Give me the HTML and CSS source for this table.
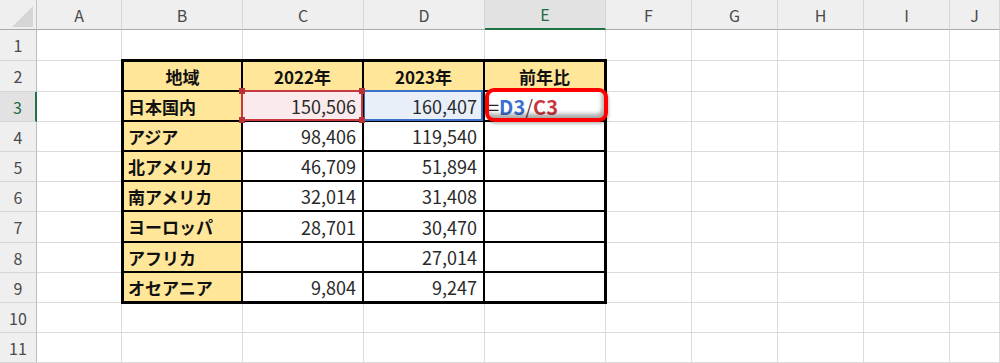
FILE: index.html
```html
<!DOCTYPE html>
<html lang="ja">
<head>
  <meta charset="UTF-8">
  <meta name="viewport" content="width=device-width, initial-scale=1.0">
  <title>地域別売上</title>
  <link rel="stylesheet" href="styles.css">
</head>
<body>
  <div class="sheet">
    <!-- 見出し行 -->
    <div class="corner">
      <svg width="37" height="30" viewBox="0 0 37 30"><polygon points="12,27 33,6 33,27" fill="#d6d6d6"/></svg>
    </div>
    <div class="colhead">A</div>
    <div class="colhead">B</div>
    <div class="colhead">C</div>
    <div class="colhead">D</div>
    <div class="colhead selected">E</div>
    <div class="colhead">F</div>
    <div class="colhead">G</div>
    <div class="colhead">H</div>
    <div class="colhead">I</div>
    <div class="colhead">J</div>

    <!-- 1行目 -->
    <div class="rowhead">1</div>
    <div class="cell"></div><div class="cell"></div><div class="cell"></div><div class="cell"></div><div class="cell"></div>
    <div class="cell"></div><div class="cell"></div><div class="cell"></div><div class="cell"></div><div class="cell"></div>

    <!-- 表 B2:E9 -->
    <div class="tbl">
      <div class="head">地域</div>
      <div class="head">2022年</div>
      <div class="head">2023年</div>
      <div class="head">前年比</div>

      <div class="name">日本国内</div>
      <div class="num ref-c">150,506</div>
      <div class="num ref-d">160,407</div>
      <div class="formula">=<b class="blue">D3</b><span class="slash">/</span><b class="red">C3</b></div>

      <div class="name">アジア</div>
      <div class="num">98,406</div>
      <div class="num">119,540</div>
      <div class="num"></div>

      <div class="name">北アメリカ</div>
      <div class="num">46,709</div>
      <div class="num">51,894</div>
      <div class="num"></div>

      <div class="name">南アメリカ</div>
      <div class="num">32,014</div>
      <div class="num">31,408</div>
      <div class="num"></div>

      <div class="name">ヨーロッパ</div>
      <div class="num">28,701</div>
      <div class="num">30,470</div>
      <div class="num"></div>

      <div class="name">アフリカ</div>
      <div class="num"></div>
      <div class="num">27,014</div>
      <div class="num"></div>

      <div class="name">オセアニア</div>
      <div class="num">9,804</div>
      <div class="num">9,247</div>
      <div class="num"></div>
    </div>

    <!-- 2〜9行目 (B〜Eは表が埋める) -->
    <div class="rowhead">2</div>
    <div class="cell"></div><div class="cell"></div><div class="cell"></div><div class="cell"></div><div class="cell"></div><div class="cell"></div>
    <div class="rowhead selected">3</div>
    <div class="cell"></div><div class="cell"></div><div class="cell"></div><div class="cell"></div><div class="cell"></div><div class="cell"></div>
    <div class="rowhead">4</div>
    <div class="cell"></div><div class="cell"></div><div class="cell"></div><div class="cell"></div><div class="cell"></div><div class="cell"></div>
    <div class="rowhead">5</div>
    <div class="cell"></div><div class="cell"></div><div class="cell"></div><div class="cell"></div><div class="cell"></div><div class="cell"></div>
    <div class="rowhead">6</div>
    <div class="cell"></div><div class="cell"></div><div class="cell"></div><div class="cell"></div><div class="cell"></div><div class="cell"></div>
    <div class="rowhead">7</div>
    <div class="cell"></div><div class="cell"></div><div class="cell"></div><div class="cell"></div><div class="cell"></div><div class="cell"></div>
    <div class="rowhead">8</div>
    <div class="cell"></div><div class="cell"></div><div class="cell"></div><div class="cell"></div><div class="cell"></div><div class="cell"></div>
    <div class="rowhead">9</div>
    <div class="cell"></div><div class="cell"></div><div class="cell"></div><div class="cell"></div><div class="cell"></div><div class="cell"></div>

    <!-- 10〜11行目 -->
    <div class="rowhead">10</div>
    <div class="cell"></div><div class="cell"></div><div class="cell"></div><div class="cell"></div><div class="cell"></div>
    <div class="cell"></div><div class="cell"></div><div class="cell"></div><div class="cell"></div><div class="cell"></div>
    <div class="rowhead">11</div>
    <div class="cell"></div><div class="cell"></div><div class="cell"></div><div class="cell"></div><div class="cell"></div>
    <div class="cell"></div><div class="cell"></div><div class="cell"></div><div class="cell"></div><div class="cell"></div>
  </div>
</body>
</html>
```

FILE: styles.css
```css
body {
  margin: 0;
  background-color: #fff;
  font-family: "Noto Sans CJK JP", "Noto Sans", sans-serif;
  overflow: hidden;
}

.sheet {
  display: grid;
  grid-template-columns: 37px 85px 121px 121px 121px 121px 86px 86px 86px 86px 1fr;
  grid-template-rows: 30px 31px 31px 30px 30px 30px 30px 31px 30px 30px 30px 30px;
  width: 1000px;
  height: 363px;
}

.cell,
.colhead,
.rowhead,
.corner {
  box-sizing: border-box;
  border-right: 1px solid #dadada;
  border-bottom: 1px solid #dadada;
}

/* 見出し */
.corner {
  background-color: #efefef;
  border-right-color: #c4c4c4;
  border-bottom-color: #a9a9a9;
}

.corner svg {
  display: block;
}

.colhead {
  display: flex;
  align-items: center;
  justify-content: center;
  background-color: #efefef;
  border-right-color: #d6d6d6;
  border-bottom-color: #a9a9a9;
  color: #4a4a4a;
  font-size: 16px;
}

.colhead.selected {
  background-color: #e2e2e2;
  color: #1e6b43;
  border-bottom: 2px solid #217346;
}

.rowhead {
  display: flex;
  align-items: center;
  justify-content: center;
  background-color: #efefef;
  border-right-color: #bcbcbc;
  border-bottom-color: #d6d6d6;
  color: #4a4a4a;
  font-size: 16px;
}

.rowhead.selected {
  background-color: #e2e2e2;
  color: #1e6b43;
  border-right: 2px solid #217346;
}

/* 表 */
.tbl {
  grid-column: 3 / 7;
  grid-row: 3 / 11;
  margin: -2px -1px -1px -1px;
  border: 3px solid #000;
  display: grid;
  grid-template-columns: 119px 121px 121px 1fr;
  grid-template-rows: 30px 30px 30px 30px 30px 31px 30px 1fr;
  position: relative;
  z-index: 1;
  background-color: #fff;
  font-size: 17px;
  color: #222;
}

.tbl > div {
  box-sizing: border-box;
  border-right: 2px solid #000;
  border-bottom: 2px solid #000;
  display: flex;
  align-items: center;
  position: relative;
}

.tbl > div:nth-child(4n) {
  border-right: none;
}

.tbl > div:nth-last-child(-n+4) {
  border-bottom: none;
}

.head {
  background-color: #ffe699;
  justify-content: center;
  font-weight: bold;
  color: #111;
}

.name {
  background-color: #ffe699;
  padding-left: 4px;
  font-weight: bold;
  color: #111;
}

.num {
  justify-content: flex-end;
  padding-right: 6px;
  font-size: 18px;
  color: #2a2a2a;
}

/* 参照セルの色枠 */
.ref-c {
  background-color: #fbeaeb;
  z-index: 2;
}

.ref-c::after {
  content: "";
  position: absolute;
  top: -2px;
  left: -2px;
  right: -1px;
  bottom: -1px;
  border: 2px solid #c7393f;
}

.ref-c::before {
  content: "";
  position: absolute;
  top: -4px;
  left: -4px;
  right: -3px;
  bottom: -3px;
  background:
    linear-gradient(#b8323a, #b8323a) top left / 6px 6px no-repeat,
    linear-gradient(#b8323a, #b8323a) top right / 6px 6px no-repeat,
    linear-gradient(#b8323a, #b8323a) bottom left / 6px 6px no-repeat,
    linear-gradient(#b8323a, #b8323a) bottom right / 6px 6px no-repeat;
  z-index: 1;
}

.ref-d {
  background-color: #e9eff8;
  z-index: 1;
}

.ref-d::after {
  content: "";
  position: absolute;
  top: -2px;
  left: -1px;
  right: 0;
  bottom: -1px;
  border: 2px solid #3a70c8;
}

/* 入力中の数式 */
.formula {
  padding-left: 3px;
  z-index: 3;
  color: #222;
  font-size: 20px;
}

.formula::after {
  content: "";
  position: absolute;
  top: -4px;
  left: 0;
  right: -4px;
  bottom: -2px;
  border: 4px solid #f00;
  border-radius: 9px;
  box-shadow: inset -2px -4px 4px rgba(0, 0, 0, 0.35), 1px 2px 3px rgba(0, 0, 0, 0.25);
}

.blue {
  color: #3a70d0;
}

.red {
  color: #c8373d;
}

.slash {
  color: #6e3a50;
}
```
